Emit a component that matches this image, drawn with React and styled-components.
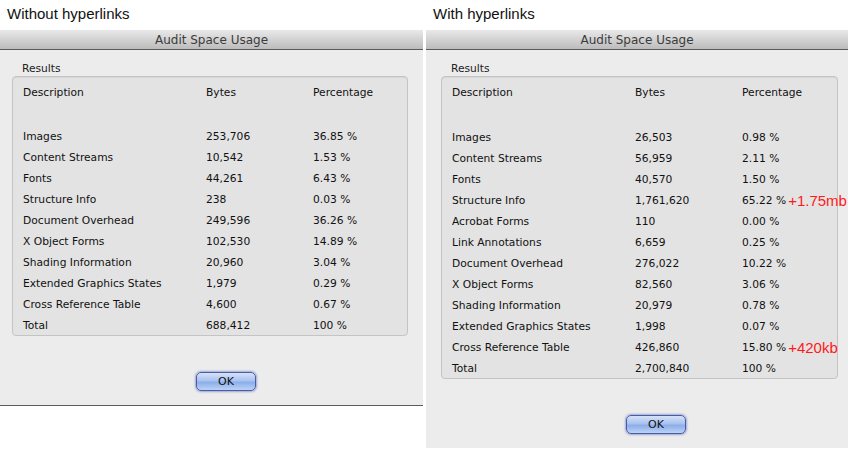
import React from 'react';
import styled, { createGlobalStyle } from 'styled-components';

const GlobalStyle = createGlobalStyle`
    body {
        margin: 0;
        background: #ffffff;
        overflow: hidden;
        font-family: "DejaVu Sans", "Liberation Sans", sans-serif;
    }
`

const Page = styled.div`
    display: flex;
    gap: 3px;
    width: 848px;
    height: 449px;
`
const Column = styled.div`
    width: ${props => props.width}px;
    display: flex;
    flex-direction: column;
`
const Caption = styled.div`
    height: 30px;
    box-sizing: border-box;
    padding: 5px 0 0 7px;
    font-family: "Liberation Sans", Arial, sans-serif;
    font-size: 15px;
    color: #111;
`
const Dialog = styled.div`
    background: #ececec;
    border-bottom: ${props => props.bottomLine ? '1px solid #5c5c5c' : 'none'};
`
const TitleBar = styled.div`
    height: 19px;
    border-bottom: 1px solid #5a5a5a;
    background: linear-gradient(#e9e9e9, #d2d2d2 50%, #bcbcbc);
    display: flex;
    align-items: center;
    justify-content: center;
    font-size: 12px;
    color: #3c3c3c;
`
const Body = styled.div`
    padding: 12px ${props => props.padRight}px 14px ${props => props.padLeft}px;
`
const GroupLabel = styled.div`
    height: 13px;
    line-height: 13px;
    margin: 0 0 1px 10px;
    font-size: 10.7px;
    color: #222;
`
const GroupBox = styled.div`
    background: #e3e3e3;
    border: 1px solid #c4c4c4;
    border-radius: 4px;
    padding-top: 4px;
    box-shadow: inset 0 1px 1px rgba(0, 0, 0, 0.06);
`
const Row = styled.div`
    display: grid;
    grid-template-columns: 183px 107px 1fr;
    box-sizing: border-box;
    height: 21px;
    padding: 2px 0 0 10px;
    align-items: center;
    margin-bottom: ${props => props.spacer || 0}px;
    font-size: 10.7px;
    color: #111;
    white-space: nowrap;
`
const Cell = styled.div`
    display: flex;
    align-items: center;
    overflow: visible;
`
const Note = styled.span`
    margin-left: 2px;
    font-family: "Liberation Sans", Arial, sans-serif;
    font-size: 15px;
    color: #ff1a1a;
`
const Footer = styled.div`
    padding: ${props => props.gap}px 0 0 ${props => props.buttonLeft}px;
`
const OkButton = styled.button`
    width: 60px;
    height: 19px;
    padding: 0;
    border: 1px solid #4d5c9c;
    border-radius: 5px;
    background: linear-gradient(#d6e2f8, #a9c2f0 45%, #8caee9 55%, #bcd2f7);
    box-shadow: 0 0 2px 1px rgba(90, 110, 200, 0.55);
    font-family: "DejaVu Sans", sans-serif;
    font-size: 11px;
    color: #111;
`

const withoutLinks = [
    ['Images', '253,706', '36.85 %'],
    ['Content Streams', '10,542', '1.53 %'],
    ['Fonts', '44,261', '6.43 %'],
    ['Structure Info', '238', '0.03 %'],
    ['Document Overhead', '249,596', '36.26 %'],
    ['X Object Forms', '102,530', '14.89 %'],
    ['Shading Information', '20,960', '3.04 %'],
    ['Extended Graphics States', '1,979', '0.29 %'],
    ['Cross Reference Table', '4,600', '0.67 %'],
    ['Total', '688,412', '100 %'],
]

const withLinks = [
    ['Images', '26,503', '0.98 %'],
    ['Content Streams', '56,959', '2.11 %'],
    ['Fonts', '40,570', '1.50 %'],
    ['Structure Info', '1,761,620', '65.22 %', '+1.75mb'],
    ['Acrobat Forms', '110', '0.00 %'],
    ['Link Annotations', '6,659', '0.25 %'],
    ['Document Overhead', '276,022', '10.22 %'],
    ['X Object Forms', '82,560', '3.06 %'],
    ['Shading Information', '20,979', '0.78 %'],
    ['Extended Graphics States', '1,998', '0.07 %'],
    ['Cross Reference Table', '426,860', '15.80 %', '+420kb'],
    ['Total', '2,700,840', '100 %'],
]

const AuditDialog = ({ rows, padLeft, padRight, buttonLeft, spacer, footerGap, bottomLine }) => (
    <Dialog bottomLine={bottomLine}>
        <TitleBar>Audit Space Usage</TitleBar>
        <Body padLeft={padLeft} padRight={padRight}>
            <GroupLabel>Results</GroupLabel>
            <GroupBox>
                <Row spacer={spacer}>
                    <Cell>Description</Cell>
                    <Cell>Bytes</Cell>
                    <Cell>Percentage</Cell>
                </Row>
                {rows.map(([name, bytes, pct, note]) => (
                    <Row key={name}>
                        <Cell>{name}</Cell>
                        <Cell>{bytes}</Cell>
                        <Cell>{pct}{note && <Note>{note}</Note>}</Cell>
                    </Row>
                ))}
            </GroupBox>
            <Footer buttonLeft={buttonLeft} gap={footerGap}>
                <OkButton>OK</OkButton>
            </Footer>
        </Body>
    </Dialog>
)

const App = () => {
    return (
        <>
            <GlobalStyle />
            <Page>
                <Column width={423}>
                    <Caption>Without hyperlinks</Caption>
                    <AuditDialog rows={withoutLinks} padLeft={12} padRight={15} buttonLeft={184}
                        spacer={23} footerGap={34} bottomLine />
                </Column>
                <Column width={422}>
                    <Caption>With hyperlinks</Caption>
                    <AuditDialog rows={withLinks} padLeft={15} padRight={10} buttonLeft={185}
                        spacer={24} footerGap={34} />
                </Column>
            </Page>
        </>
    )
}

export default App
